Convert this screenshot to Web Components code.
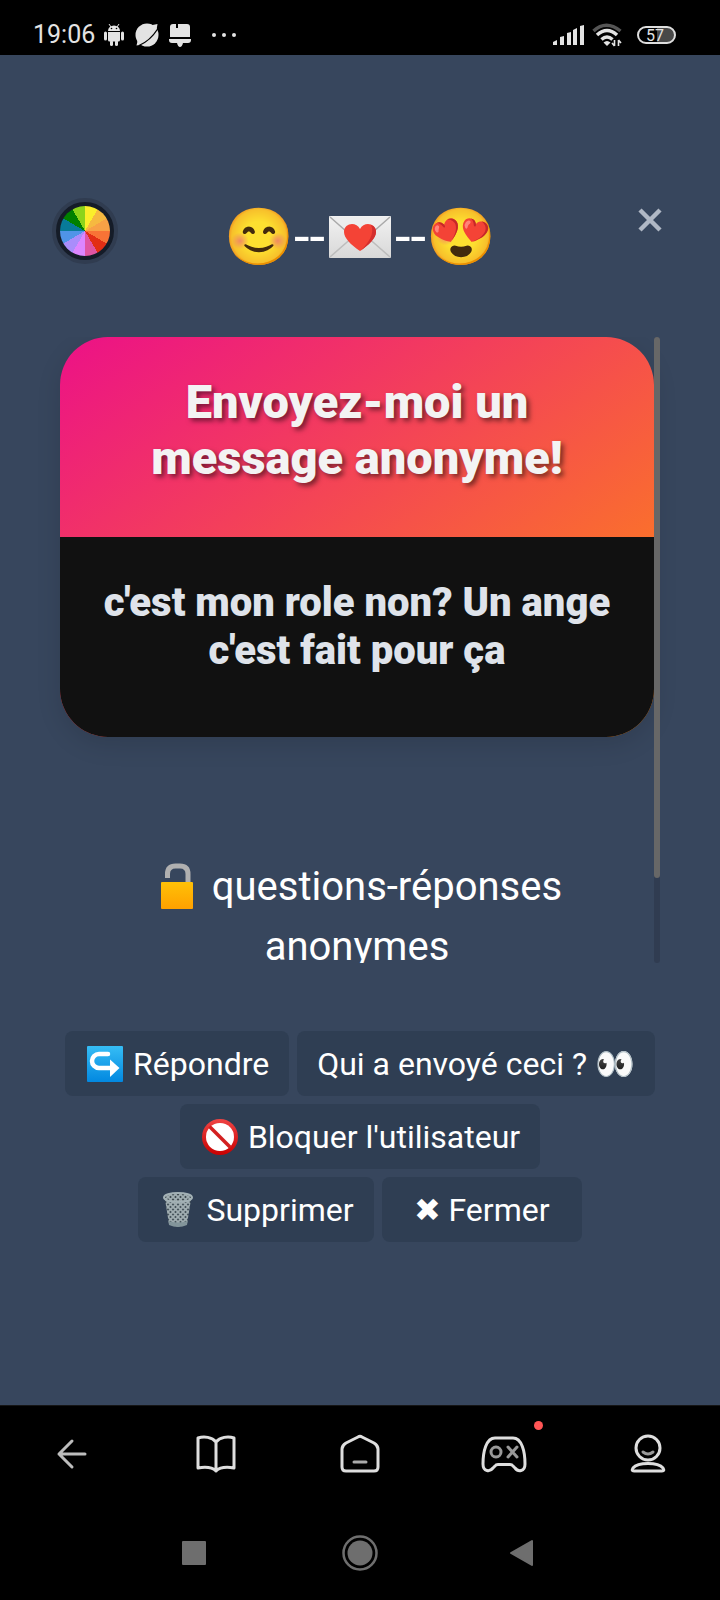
<!DOCTYPE html>
<html lang="fr">
<head>
<meta charset="utf-8">
<meta name="viewport" content="width=device-width, initial-scale=1">
<title>Message anonyme</title>
<style>
html, body { margin: 0; background: #000; }
body { font-family: Roboto, sans-serif; color: #fff; }
</style>
</head>
<body>
<phone-screen>
  <status-bar slot="top" time="19:06" battery="57"></status-bar>
  <message-dialog>
    <message-card slot="content">
      <span slot="title">Envoyez-moi un message anonyme!</span>
      <span>c'est mon role non? Un ange c'est fait pour ça</span>
    </message-card>
    <promo-line slot="content">questions-réponses anonymes</promo-line>
    <action-row slot="actions">
      <action-button icon="reply">Répondre</action-button>
      <action-button>Qui a envoyé ceci ? 👀</action-button>
    </action-row>
    <action-row slot="actions">
      <action-button icon="block">Bloquer l'utilisateur</action-button>
    </action-row>
    <action-row slot="actions">
      <action-button icon="trash">Supprimer</action-button>
      <action-button>✖ Fermer</action-button>
    </action-row>
  </message-dialog>
  <app-nav slot="bottom"></app-nav>
  <system-nav slot="bottom"></system-nav>
</phone-screen>

<script>
const ICONS = {
  android: [20, 22, `<g fill="#e3e3e3"><path d="M4 7a6 5.500 0 0 1 12 0z"/><path d="M4 8h12v8a1.500 1.500 0 0 1-1.500 1.500h-9A1.500 1.500 0 0 1 4 16z"/><rect y="7.500" width="3" height="9" rx="1.500"/><rect x="17" y="7.500" width="3" height="9" rx="1.500"/><rect x="6" y="16" width="3" height="6" rx="1.500"/><rect x="11" y="16" width="3" height="6" rx="1.500"/><path d="m5 0 2 3m8-3-2 3" stroke="#e3e3e3"/></g><circle cx="7.500" cy="4.500" r=".8"/><circle cx="12.500" cy="4.500" r=".8"/>`],
  planet: [24, 24, `<circle cx="12" cy="12" r="11.500" fill="#e3e3e3"/><path d="M15 2.500 22.500 1l-1 6zM3 16l-1.500 6.500 6-1z" fill="#e3e3e3"/><path d="M4 22.500Q15 18 23 5.500" fill="none" stroke="#000" stroke-width="1.300"/>`],
  bell: [22, 24, `<path d="M4 1h3v4h2V1h9q3 0 3 3v10H1V4q0-3 3-3zM0 16h22v1q0 3-3 3h-5q-1 4-3 4t-3-4H3q-3 0-3-3z" fill="#e3e3e3"/>`],
  dots: [26, 6, `<g fill="#e3e3e3"><circle cx="3" cy="3" r="2"/><circle cx="13" cy="3" r="2"/><circle cx="23" cy="3" r="2"/></g>`],
  signal: [31, 20, `<path d="M0 20v-3l4-2v5zM7 20v-8l4-1v9zM14 20V8l4-1v13zM20 20V5l4-2v17zM27 20V1l4-1v20z" fill="#e3e3e3"/>`],
  wifi: [30, 24, `<g fill="none" stroke-width="3.500"><path d="M1.500 8Q14 -3.500 28.500 8" stroke="#555"/><path d="M5 12Q15 3 25 12M9.500 16.500q5.500-5 11 0" stroke="#e3e3e3"/></g><path d="m11.500 19.500 3.500 3.500 3.500-3.500q-3.500-3-7 0z" fill="#e3e3e3"/><path d="M22.500 17v6m4-6v6M20 20l2.500 3m4-6 2.500 3" stroke="#e3e3e3" stroke-width="1.600"/>`],
  close: [24, 24, `<path d="m2 2 20 20M22 2 2 22" stroke="#b0b8c5" stroke-width="4.500"/>`],
  envelope: [62, 42, `<defs><linearGradient id="e" x2="0" y2="1"><stop stop-color="#f2f2f2"/><stop offset="1" stop-color="#d8d8d8"/></linearGradient></defs><rect width="62" height="42" rx="1" fill="url(#e)"/><path d="M1 41 25 20M61 41 37 20" stroke="#bdbdbd" stroke-width="1.500"/><path d="M1 1h60L36 23q-5 4-10 0z" fill="#ededed"/><path d="m1 1 25 22q5 4 10 0L61 1" fill="none" stroke="#aaa" stroke-width="1.500"/><path d="M31 35C22 29 15 22 15 16c0-9 12-11 16-3 4-8 16-6 16 3 0 6-7 13-16 19z" fill="#f44336"/><path d="M31 35c9-6 16-13 16-19 0-4-2-6-5-7 4 8-2 18-11 26z" fill="#d32f2f"/>`],
  lock: [50, 46, `<defs><linearGradient id="l" x2="0" y2="1"><stop stop-color="#ffc107"/><stop offset="1" stop-color="#ffa000"/></linearGradient></defs><path d="M15.500 15V11q0-8 8-8h4.500q8 0 8 8v12" fill="none" stroke="#b0b0b0" stroke-width="5"/><rect x="9" y="19" width="32" height="27" rx="1" fill="url(#l)"/>`],
  reply: [40, 36, `<defs><linearGradient id="r" x2="0" y2="1"><stop stop-color="#36bdf5"/><stop offset="1" stop-color="#0288e0"/></linearGradient></defs><rect x="2" width="36" height="36" rx="1" fill="url(#r)"/><path d="M23 8H14a7 7 0 0 0 0 14h12" fill="none" stroke="#fff" stroke-width="4.500" stroke-linecap="round"/><path d="m25 13.500 9.500 8.500-9.500 9z" fill="#fff"/>`],
  block: [40, 36, `<defs><linearGradient id="b" x2="0" y2="1"><stop stop-color="#ef4444"/><stop offset="1" stop-color="#c80000"/></linearGradient></defs><circle cx="20" cy="18" r="18" fill="url(#b)"/><circle cx="20" cy="18" r="14" fill="#fff"/><path d="m9.500 7.500 21 21" stroke="#d32020" stroke-width="3.500"/>`],
  trash: [40, 36, `<defs><pattern id="t" width="5" height="5" patternUnits="userSpaceOnUse"><path d="m0 0 5 5M5 0 0 5" stroke="#a0adb1" stroke-width="1.700"/></pattern></defs><path d="M7 7l4 25q9 5 18 0l4-25z" fill="#445159"/><path d="M7 7l4 25q9 5 18 0l4-25z" fill="url(#t)"/><path d="m10.500 29 .5 4q9 4 18 0l.5-4q-9.500 3-19 0z" fill="#83959b"/><ellipse cx="20" cy="5.500" rx="14" ry="4.500" fill="#3c474c"/><ellipse cx="20" cy="5.500" rx="14" ry="4.500" fill="url(#t)" stroke="#a3b1b5" stroke-width="2"/>`],
  back: [48, 48, `<path d="M37 24H11M24 11 11 24l13 13" stroke="#bdbdbd"/>`],
  book: [48, 48, `<path d="M24 12C20 7 12 6 6 8v30c6-1 14-1 18 3 4-4 12-4 18-3V8c-6-2-14-1-18 4zv29"/>`],
  home: [48, 48, `<path d="M22 7 10 13q-4 2.500-4 6v18q0 4 4 4h28q4 0 4-4V19q0-3.500-4-6L26 7q-2-1.500-4 0z"/><path d="M18 32h12" stroke="#aaa"/>`],
  game: [48, 48, `<path d="M15 8h18c9 0 12 14 12 26 0 8-7 8-10 4l-2-2q-1-1.500-3-1.500H18q-2 0-3 1.500l-2 2c-3 4-10 4-10-4C3 22 6 8 15 8z"/><g stroke="#999"><circle cx="16" cy="22" r="5"/><path d="m28 17 9 10m0-10-9 10"/></g>`],
  profile: [48, 48, `<circle cx="24" cy="18" r="12"/><path d="M10 41q-3 0-1-3c5-6 25-6 30 0q2 3-1 3z"/><path d="M19 22q5 4 10 0" stroke="#999"/>`],
  square: [24, 24, `<rect width="24" height="24" rx="1" fill="#6e6e6e"/>`],
  circle: [36, 36, `<circle cx="18" cy="18" r="16.500" fill="none" stroke="#6e6e6e" stroke-width="2.500"/><circle cx="18" cy="18" r="12.500" fill="#6e6e6e"/>`],
  triangle: [32, 28, `<path d="M1 14 22 2v24z" fill="#6e6e6e" stroke="#6e6e6e" stroke-width="2" stroke-linejoin="round"/>`]
};

class UiElement extends HTMLElement {
  constructor() {
    super();
    this.attachShadow({ mode: 'open' });
  }

  connectedCallback() {
    this.shadowRoot.innerHTML = this.render();
  }
}

class UiIcon extends UiElement {
  render() {
    const [w, h, body] = ICONS[this.getAttribute('name')];
    return `
      <style>
      :host { display: inline-block; flex: none; }
      svg { display: block; overflow: visible; }
      .line { fill: none; stroke: #dedede; stroke-width: 3; stroke-linecap: round; stroke-linejoin: round; }
      </style>
      <svg width="${w}" height="${h}" viewBox="0 0 ${w} ${h}" aria-hidden="true"><g class="${w === 48 ? 'line' : ''}">${body}</g></svg>`;
  }
}

class PhoneScreen extends UiElement {
  render() {
    return `
      <style>
      :host { display: flex; flex-direction: column; min-height: 100vh; }
      main { flex: 1; display: flex; flex-direction: column; background: #37465d; }
      </style>
      <slot name="top"></slot>
      <main><slot></slot></main>
      <slot name="bottom"></slot>`;
  }
}

class StatusBar extends UiElement {
  render() {
    return `
      <style>
      :host { display: flex; justify-content: space-between; padding: 14px 44px 0 33px; height: 41px; color: #e3e3e3; }
      div { display: flex; align-items: center; }
      time { margin-right: 2px; font-size: 25px; line-height: 41px; }
      .cell { display: flex; justify-content: center; width: 33px; }
      .more { margin-left: 15px; }
      .right { gap: 8px; }
      .battery {
        box-sizing: border-box; width: 39px; height: 18px; margin-left: 7px; padding-left: 7px;
        border: 2px solid #dedede; border-radius: 9px;
        background: linear-gradient(90deg, #000 50%, #484848 50%);
        font-size: 16px; line-height: 15px;
      }
      </style>
      <div>
        <time>${this.getAttribute('time')}</time>
        <span class="cell"><ui-icon name="android"></ui-icon></span>
        <span class="cell"><ui-icon name="planet"></ui-icon></span>
        <span class="cell"><ui-icon name="bell"></ui-icon></span>
        <ui-icon class="more" name="dots"></ui-icon>
      </div>
      <div class="right">
        <ui-icon name="signal"></ui-icon>
        <ui-icon name="wifi"></ui-icon>
        <span class="battery">${this.getAttribute('battery')}</span>
      </div>`;
  }
}

class MessageDialog extends UiElement {
  render() {
    return `
      <style>
      :host { flex: 1; display: flex; flex-direction: column; padding-top: 143px; }
      header { display: grid; grid-template-columns: 1fr auto 1fr; align-items: start; padding: 0 52px; }
      button { padding: 0; border: 0; background: none; }
      .wheel {
        width: 66px; height: 66px; box-sizing: border-box; border-radius: 50%;
        border: 4px solid #303c50; background: #151c28; padding: 4px;
      }
      .wheel::before {
        content: ""; display: block; width: 50px; height: 50px; border-radius: 50%;
        background: conic-gradient(#fbee2b 30deg, #f6b940 0 60deg, #f8a146 0 90deg, #f87336 0 120deg,
          #e22e15 0 150deg, #e055a2 0 180deg, #dc86ff 0 210deg, #a98dfb 0 240deg,
          #4f94e8 0 270deg, #087b99 0 300deg, #008000 0 330deg, #8cd41b 0);
      }
      h1 { margin: 0; padding-top: 7px; font-size: 56px; line-height: 64px; font-weight: 400; white-space: nowrap; }
      h1 ui-icon { margin: 0 4px; vertical-align: -2px; }
      .close { justify-self: end; display: grid; place-items: center; width: 36px; height: 44px; }
      .scroll { flex: 1 0 0; display: flex; min-height: 0; margin: 68px 60px; }
      .view { flex: 1; overflow: hidden; margin: 0 -30px; padding: 0 30px; }
      .track { position: relative; width: 6px; background: #303c51; border-radius: 3px; }
      .thumb { height: calc(100% - 85px); background: #676767; border-radius: 3px; }
      .actions { display: flex; flex-direction: column; gap: 8px; padding: 0 60px 163px; }
      </style>
      <header>
        <button class="wheel" aria-label="Couleurs"></button>
        <h1>😊--<ui-icon name="envelope"></ui-icon>--😍</h1>
        <button class="close" aria-label="Fermer la fenêtre"><ui-icon name="close"></ui-icon></button>
      </header>
      <div class="scroll">
        <div class="view"><slot name="content"></slot></div>
        <div class="track"><div class="thumb"></div></div>
      </div>
      <div class="actions"><slot name="actions"></slot></div>`;
  }
}

class MessageCard extends UiElement {
  render() {
    return `
      <style>
      :host {
        display: block; overflow: hidden; border-radius: 48px; text-align: center; font-weight: 900;
        background: linear-gradient(145deg, #ec1187, #ff8d10);
        box-shadow: 0 8px 24px rgba(0, 0, 0, .12);
      }
      h2 {
        margin: 0; padding: 37px 60px 51px; font-size: 47px; line-height: 56px; font-weight: 900;
        color: #f3f3f3; text-shadow: 3px 3px 5px rgba(0, 0, 0, .5);
      }
      p { margin: 0; padding: 42px 32px 62px; font-size: 40px; line-height: 48px; color: #dfe3ea; background: #111; }
      </style>
      <h2><slot name="title"></slot></h2>
      <p><slot></slot></p>`;
  }
}

class PromoLine extends UiElement {
  render() {
    return `
      <style>
      :host { display: block; margin-top: 120px; padding: 0 60px; font-size: 40px; line-height: 60px; text-align: center; }
      ui-icon { vertical-align: -9px; line-height: 0; }
      </style>
      <ui-icon name="lock"></ui-icon> <slot></slot>`;
  }
}

class ActionRow extends UiElement {
  render() {
    return `
      <style>
      :host { display: flex; flex-wrap: wrap; justify-content: center; gap: 8px; }
      </style>
      <slot></slot>`;
  }
}

class ActionButton extends UiElement {
  render() {
    const icon = this.getAttribute('icon');
    return `
      <style>
      button {
        display: flex; align-items: center; justify-content: center; gap: 8px;
        min-width: 200px; height: 65px; padding: 0 20px; border: 0; border-radius: 8px;
        background: #2f3e53; color: #fff; font: inherit; font-size: 32px; white-space: nowrap;
      }
      </style>
      <button>${icon ? `<ui-icon name="${icon}"></ui-icon>` : ''}<span><slot></slot></span></button>`;
  }
}

class AppNav extends UiElement {
  render() {
    const links = [['back', 'Retour'], ['book', 'Lecture'], ['home', 'Accueil'], ['game', 'Jeux'], ['profile', 'Profil']];
    return `
      <style>
      nav { display: grid; grid-template-columns: repeat(5, 1fr); height: 95px; border-top: 1px solid #151515; background: #000; }
      a { display: grid; place-items: center; }
      .icon { position: relative; }
      .game::after {
        content: ""; position: absolute; top: -9px; right: -15px;
        width: 9px; height: 9px; border-radius: 50%; background: #ff5555;
      }
      ui-icon { display: block; }
      </style>
      <nav>${links.map(([name, label]) => `
        <a href="#${name}" aria-label="${label}"><span class="icon ${name}"><ui-icon name="${name}"></ui-icon></span></a>`).join('')}
      </nav>`;
  }
}

class SystemNav extends UiElement {
  render() {
    return `
      <style>
      :host { display: flex; justify-content: center; background: #000; height: 95px; padding-top: 4px; }
      button { display: grid; place-items: center; width: 166px; padding: 0; border: 0; background: none; }
      </style>
      <button aria-label="Applications récentes"><ui-icon name="square"></ui-icon></button>
      <button aria-label="Écran d'accueil"><ui-icon name="circle"></ui-icon></button>
      <button aria-label="Précédent"><ui-icon name="triangle"></ui-icon></button>`;
  }
}

customElements.define('ui-icon', UiIcon);
customElements.define('phone-screen', PhoneScreen);
customElements.define('status-bar', StatusBar);
customElements.define('message-dialog', MessageDialog);
customElements.define('message-card', MessageCard);
customElements.define('promo-line', PromoLine);
customElements.define('action-row', ActionRow);
customElements.define('action-button', ActionButton);
customElements.define('app-nav', AppNav);
customElements.define('system-nav', SystemNav);
</script>
</body>
</html>
